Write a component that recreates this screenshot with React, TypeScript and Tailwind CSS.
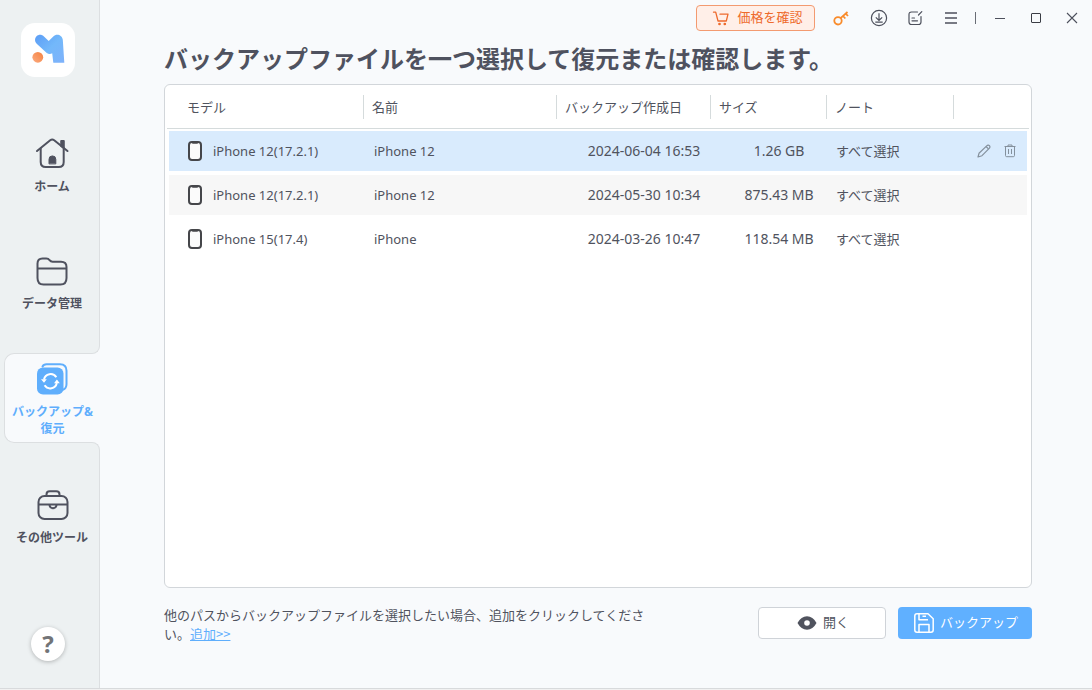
import { useState } from 'react';
import type { ReactNode } from 'react';
import clsx from 'clsx';

const backups = [
  { id: 1, model: 'iPhone 12(17.2.1)', name: 'iPhone 12', date: '2024-06-04 16:53', size: '1.26 GB', note: 'すべて選択' },
  { id: 2, model: 'iPhone 12(17.2.1)', name: 'iPhone 12', date: '2024-05-30 10:34', size: '875.43 MB', note: 'すべて選択' },
  { id: 3, model: 'iPhone 15(17.4)', name: 'iPhone', date: '2024-03-26 10:47', size: '118.54 MB', note: 'すべて選択' },
];

const columns = [
  { label: 'モデル', width: 'w-[196px]' },
  { label: '名前', width: '' },
  { label: 'バックアップ作成日', width: 'w-[154px]' },
  { label: 'サイズ', width: 'w-[116px]' },
  { label: 'ノート', width: 'w-[127px]' },
  { label: '', width: 'w-[76px]' },
];

function Logo() {
  return (
    <svg viewBox="0 0 54 54" className="h-[54px] w-[54px]" aria-hidden="true">
      <defs>
        <linearGradient id="logo-blue" x1="0" y1="0" x2="1" y2="1">
          <stop offset="0" stopColor="#5c9df6" />
          <stop offset="0.5" stopColor="#73b8fa" />
          <stop offset="1" stopColor="#7fb2fb" />
        </linearGradient>
        <linearGradient id="logo-orange" x1="0" y1="1" x2="1" y2="0">
          <stop offset="0" stopColor="#fbab80" />
          <stop offset="1" stopColor="#f5813f" />
        </linearGradient>
      </defs>
      <path
        d="M15.500 13.200c2-2 5.200-2 7.200 0l5 4.800 4.600-4.600c3.400-3.400 9-1.200 9.500 3.400L43.300 39.800H32.300L31.200 30.300c-1.900 1-4.300.7-6-.9l-9.500-8.700c-2.200-2-2.300-5.400-.2-7.500z"
        fill="url(#logo-blue)"
      />
      <circle cx="16.800" cy="34.300" r="5.400" fill="url(#logo-orange)" />
    </svg>
  );
}

function HomeIcon() {
  return (
    <svg viewBox="0 0 34 34" className="h-[34px] w-[34px]" fill="none" stroke="currentColor" strokeWidth="2" strokeLinecap="round" strokeLinejoin="round" aria-hidden="true">
      <path d="M2 15 15.200 4.200c1.200-.9 2.800-.9 4 0L32.500 15" />
      <path d="M5.700 12.500V26c0 3.400 1.600 5 5 5h13c3.400 0 5-1.600 5-5V12.500" />
      <path d="M26.200 5h2.600v7l-2.600-2.100z" fill="currentColor" />
      <path d="M14 27.500v-4.200a3.400 3.400 0 0 1 6.800 0v4.200z" fill="currentColor" strokeWidth="1" />
    </svg>
  );
}

function FolderIcon() {
  return (
    <svg viewBox="0 0 34 34" className="h-[34px] w-[34px]" fill="none" stroke="currentColor" strokeWidth="2" strokeLinejoin="round" aria-hidden="true">
      <path d="M2.500 10.500c0-3.300 1.700-5 5-5h3.800c1.500 0 2.500.5 3.300 1.700.8 1.100 1.600 1.500 3 1.500H26c3.500 0 5.500 1.900 5.500 5.300V25c0 4-1.900 6.500-6 6.500h-17c-4 0-6-2.500-6-6.500z" />
      <path d="M2.500 15.500h29" />
    </svg>
  );
}

function BackupIcon() {
  return (
    <svg viewBox="0 0 34 34" className="h-[34px] w-[34px]" fill="none" aria-hidden="true">
      <path d="M6.500 4.500c.8-1.700 2-2.300 4-2.300h13.500c4.300 0 6.500 2.200 6.500 6.500V22c0 3.200-1.200 5-3.600 5.700" stroke="currentColor" strokeWidth="2" strokeLinecap="round" />
      <rect x="1" y="5.500" width="26.500" height="27" rx="6" fill="currentColor" />
      <path d="M8 17.500a6.700 6.700 0 0 1 12.300-2.200M20.800 21a6.700 6.700 0 0 1-12.200 2.300" stroke="white" strokeWidth="2" />
      <path d="M5 17.200h5.800l-2.800 3.600zM18 21.200h5.800l-2.900-3.700z" fill="white" />
    </svg>
  );
}

function ToolboxIcon() {
  return (
    <svg viewBox="0 0 34 34" className="h-[34px] w-[34px]" fill="none" stroke="currentColor" strokeWidth="2" strokeLinejoin="round" aria-hidden="true">
      <rect x="3.500" y="9" width="29" height="23" rx="6" />
      <path d="M11.500 9V7.500c0-2.200 1.100-3.200 3.200-3.200h6.600c2.100 0 3.200 1 3.200 3.200V9" />
      <path d="M3.500 17.500h29" />
      <path d="M14.500 18c.2 2.200 1.300 3.200 3.500 3.200s3.300-1 3.500-3.200" />
    </svg>
  );
}

function CartIcon() {
  return (
    <svg viewBox="0 0 18 16" className="h-4 w-[18px]" fill="none" stroke="currentColor" strokeWidth="1.300" strokeLinecap="round" strokeLinejoin="round" aria-hidden="true">
      <path d="M1.500 2.200h2.200L6 11h8.300L16 4.200H8" />
      <circle cx="7.500" cy="14" r="0.700" fill="currentColor" />
      <circle cx="12.800" cy="14" r="0.700" fill="currentColor" />
    </svg>
  );
}

function KeyIcon() {
  return (
    <svg viewBox="0 0 16 16" className="h-4 w-4" fill="none" stroke="currentColor" strokeWidth="1.800" aria-hidden="true">
      <circle cx="5" cy="10.800" r="3.700" />
      <path d="M7.600 8.200 14.500 2M10 6l2.300 2.500M12.700 3.600 15 6" />
    </svg>
  );
}

function DownloadIcon() {
  return (
    <svg viewBox="0 0 18 18" className="h-[18px] w-[18px]" fill="none" stroke="currentColor" strokeWidth="1.200" aria-hidden="true">
      <circle cx="9" cy="9" r="7.600" />
      <path d="M9 4.300v7M5.800 8.400 9 11.500l3.200-3.100M5.300 13.200h7.400" />
    </svg>
  );
}

function FeedbackIcon() {
  return (
    <svg viewBox="0 0 16 16" className="h-4 w-4" fill="none" stroke="currentColor" strokeWidth="1.200" strokeLinecap="round" aria-hidden="true">
      <path d="M10.500 2H4.500C2.700 2 2 2.700 2 4.500v7.500c0 1.800.7 2.500 2.500 2.500h7c1.800 0 2.500-.7 2.500-2.500V6.500" />
      <path d="m11.500 5 3.300-3.300" />
      <path d="M5 8h2.500M5 10.800h5.500" />
    </svg>
  );
}

function MenuIcon() {
  return (
    <svg viewBox="0 0 14 14" className="h-3.5 w-3.5" stroke="currentColor" strokeWidth="1.300" aria-hidden="true">
      <path d="M1 2h12M1 7h12M1 12h12" />
    </svg>
  );
}

function PhoneIcon() {
  return (
    <svg viewBox="0 0 14 20" className="h-5 w-3.5 shrink-0" fill="none" aria-hidden="true">
      <rect x="1" y="1" width="12" height="18" rx="3" fill="#fbfbfb" stroke="#45464a" strokeWidth="2" />
      <path d="M4 1h6v.8c0 .6-.4 1-1 1H5c-.6 0-1-.4-1-1z" fill="#45464a" />
    </svg>
  );
}

function PencilIcon() {
  return (
    <svg viewBox="0 0 14 14" className="h-3.5 w-3.5" fill="none" stroke="currentColor" strokeWidth="1.200" strokeLinejoin="round" aria-hidden="true">
      <path d="m1 13 1-3.700 7.700-7.400c.9-.9 2-.9 2.700-.2.800.8.700 1.900-.2 2.700L5 11.700z" />
      <path d="m9 2.500 2.500 2.400" />
    </svg>
  );
}

function TrashIcon() {
  return (
    <svg viewBox="0 0 12 14" className="h-3.5 w-3" fill="none" stroke="currentColor" strokeWidth="1" aria-hidden="true">
      <path d="M.500 2.500h11M4 2.500V1h4v1.500M1.500 2.500v9c0 .8.400 1.200 1.200 1.200h6.600c.800 0 1.200-.4 1.200-1.200v-9" />
      <path d="M4.500 5v5M7.500 5v5" />
    </svg>
  );
}

function EyeIcon() {
  return (
    <svg viewBox="0 0 20 14" className="h-3.5 w-5" aria-hidden="true">
      <path d="M.500 7C3 2.500 6 .300 10 .300S17 2.500 19.500 7C17 11.500 14 13.700 10 13.700S3 11.500.500 7z" fill="currentColor" />
      <circle cx="10" cy="7" r="2.800" fill="white" />
    </svg>
  );
}

function SaveIcon() {
  return (
    <svg viewBox="0 0 20 20" className="h-5 w-5" fill="none" stroke="currentColor" strokeWidth="1.500" strokeLinejoin="round" aria-hidden="true">
      <path d="M3 .800h11l5.200 5V17c0 1.500-.700 2.200-2.200 2.200H3C1.500 19.200.800 18.500.800 17V3C.800 1.500 1.500.800 3 .800z" />
      <path d="M5 .800v6h9M8.500 3.300H12M5 19v-7.500h10V19" />
    </svg>
  );
}

interface NavItemProps {
  icon: ReactNode;
  label: string;
}

function NavItem({ icon, label }: NavItemProps) {
  return (
    <button type="button" className="flex w-full flex-col items-center gap-[9px] pl-[5px] text-xs leading-4 font-bold text-[#4f525f]">
      {icon}
      <span>{label}</span>
    </button>
  );
}

function WindowButton({ label, className, children }: { label: string; className?: string; children: ReactNode }) {
  return (
    <button type="button" aria-label={label} className={clsx('flex h-9 w-9 items-center justify-center', className)}>
      {children}
    </button>
  );
}

function Sidebar() {
  return (
    <aside className="flex w-[100px] shrink-0 flex-col bg-[#edf1f2]">
      <div className="border-r border-[#dcdfe1] pt-[23px] pb-[41px]">
        <div className="ml-[21px] h-[54px] w-[54px] rounded-[14px] bg-white">
          <Logo />
        </div>
        <nav className="mt-[59px] flex flex-col gap-[58px]">
          <NavItem icon={<HomeIcon />} label="ホーム" />
          <NavItem icon={<FolderIcon />} label="データ管理" />
        </nav>
      </div>

      {/* Active tab, open towards the content area */}
      <div className="relative pl-1">
        <span className="absolute right-0 -top-[9px] h-2.5 w-2.5 bg-[#f8fafc]">
          <span className="block h-full w-full rounded-br-lg border-r border-b border-[#dcdfe1] bg-[#edf1f2]" />
        </span>
        <button
          type="button"
          className="flex w-full flex-col items-center gap-[7px] rounded-l-[10px] border-y border-l border-[#dcdfe1] bg-[#f8fafc] pt-2 pb-[5px] text-xs leading-[17px] font-bold text-[#5faefc]"
        >
          <BackupIcon />
          <span>
            バックアップ&amp;
            <br />
            復元
          </span>
        </button>
        <span className="absolute right-0 -bottom-[9px] h-2.5 w-2.5 bg-[#f8fafc]">
          <span className="block h-full w-full rounded-tr-lg border-t border-r border-[#dcdfe1] bg-[#edf1f2]" />
        </span>
      </div>

      <div className="flex flex-1 flex-col justify-between border-r border-[#dcdfe1] pt-11 pb-[27px]">
        <NavItem icon={<ToolboxIcon />} label="その他ツール" />
        <button
          type="button"
          className="ml-[31px] flex h-[34px] w-[34px] items-center justify-center rounded-full bg-white font-['Noto_Sans',sans-serif] text-2xl leading-none font-bold text-[#727477] shadow-[0_1px_4px_rgba(0,0,0,0.25)]"
        >
          ?
        </button>
      </div>
    </aside>
  );
}

function TitleBar() {
  return (
    <header className="flex h-9 items-center justify-end pr-0.5 text-[#4d505c]">
      <button
        type="button"
        className="mr-2 flex h-[26px] w-[119px] items-center justify-center gap-[7px] rounded border border-[#f39a70] bg-[#ffefe8] pl-1 text-[13px] text-[#ee6a2c]"
      >
        <CartIcon />
        価格を確認
      </button>
      <WindowButton label="キー" className="mr-0.5 text-[#f98b2b]">
        <KeyIcon />
      </WindowButton>
      <WindowButton label="ダウンロード">
        <DownloadIcon />
      </WindowButton>
      <WindowButton label="フィードバック">
        <FeedbackIcon />
      </WindowButton>
      <WindowButton label="メニュー">
        <MenuIcon />
      </WindowButton>
      <span className="mx-1.5 h-3 w-px bg-[#696c75]" />
      <WindowButton label="最小化">
        <span className="h-px w-2.5 bg-[#4d505c]" />
      </WindowButton>
      <WindowButton label="最大化">
        <span className="h-2.5 w-2.5 rounded-[1px] border border-[#3a3c44]" />
      </WindowButton>
      <WindowButton label="閉じる">
        <svg viewBox="0 0 12 12" className="h-3 w-3" stroke="currentColor" strokeWidth="1.100" aria-hidden="true">
          <path d="m1 1 10 10M11 1 1 11" />
        </svg>
      </WindowButton>
    </header>
  );
}

function BackupTable() {
  const [selected, setSelected] = useState(1);

  return (
    <div className="flex-1 rounded-md border border-[#d2d6da] bg-white px-0.5">
      <table className="w-full table-fixed border-separate border-spacing-0 text-left text-[#50535e]">
        <thead>
          <tr className="h-11">
            {columns.map((column, index) => (
              <th key={index} scope="col" className={clsx('border-b border-[#d5dbdc] p-0 text-[13px] font-normal', column.width)}>
                <div className={clsx('flex h-6 items-center pt-0.5', index === 0 ? 'pl-5' : 'border-l border-[#d5dbdc] pl-2')}>
                  {column.label}
                </div>
              </th>
            ))}
          </tr>
        </thead>
        <tbody className="text-sm leading-5">
          {backups.map((backup, index) => {
            const isSelected = backup.id === selected;
            const cell = clsx(
              'h-11 border-y-2 border-white p-0',
              isSelected ? 'bg-[#d9ebfd]' : index % 2 === 1 ? 'bg-[#f7f7f7]' : 'bg-white'
            );
            return (
              <tr key={backup.id} onClick={() => setSelected(backup.id)}>
                <td className={clsx(cell, 'border-l-2')}>
                  <div className="flex items-center gap-[11px] pl-[19px] text-[13px]">
                    <PhoneIcon />
                    {backup.model}
                  </div>
                </td>
                <td className={cell}>
                  <div className="pl-[11px] text-[13px]">{backup.name}</div>
                </td>
                <td className={cell}>
                  <div className="pl-[22px] text-center whitespace-nowrap">{backup.date}</div>
                </td>
                <td className={cell}>
                  <div className="pl-[22px] text-center whitespace-nowrap">{backup.size}</div>
                </td>
                <td className={cell}>
                  <div className="pl-2.5 text-[13px]">{backup.note}</div>
                </td>
                <td className={clsx(cell, 'border-r-2')}>
                  {isSelected && (
                    <div className="flex justify-end gap-[13px] pr-[11px] text-[#84909c]">
                      <button type="button" aria-label="編集">
                        <PencilIcon />
                      </button>
                      <button type="button" aria-label="削除">
                        <TrashIcon />
                      </button>
                    </div>
                  )}
                </td>
              </tr>
            );
          })}
        </tbody>
      </table>
    </div>
  );
}

export default function App() {
  return (
    <div className="flex min-h-screen flex-col bg-[#f8fafc] font-['Noto_Sans','Noto_Sans_CJK_JP',sans-serif]">
      <div className="flex flex-1">
        <Sidebar />
        <div className="flex min-w-0 flex-1 flex-col">
          <TitleBar />
          <main className="flex flex-1 flex-col pt-[5px] pr-[60px] pb-[45px] pl-16">
            <h1 className="mb-[7px] text-2xl leading-9 font-bold text-[#4f525f]">
              バックアップファイルを一つ選択して復元または確認します。
            </h1>
            <BackupTable />
            <div className="mt-[15px] flex items-center justify-between">
              <p className="max-w-[490px] pt-0.5 font-['Noto_Sans_CJK_JP',sans-serif] text-[13px] leading-[19px] text-[#50535e]">
                他のパスからバックアップファイルを選択したい場合、追加をクリックしてください。
                <a href="#" className="text-[#5faefc] underline">
                  追加&gt;&gt;
                </a>
              </p>
              <div className="flex gap-3 text-[13px]">
                <button
                  type="button"
                  className="flex h-8 w-32 items-center justify-center gap-1.5 rounded border border-[#cfd3d8] bg-white pl-0.5 text-[#50535e]"
                >
                  <EyeIcon />
                  開く
                </button>
                <button type="button" className="flex h-8 w-[134px] items-center justify-center gap-1.5 rounded bg-[#60b0ff] pl-0.5 text-white">
                  <SaveIcon />
                  バックアップ
                </button>
              </div>
            </div>
          </main>
        </div>
      </div>
      <div className="h-0.5 border-t border-[#d8dadc] bg-[#f1f1f1]" />
    </div>
  );
}
